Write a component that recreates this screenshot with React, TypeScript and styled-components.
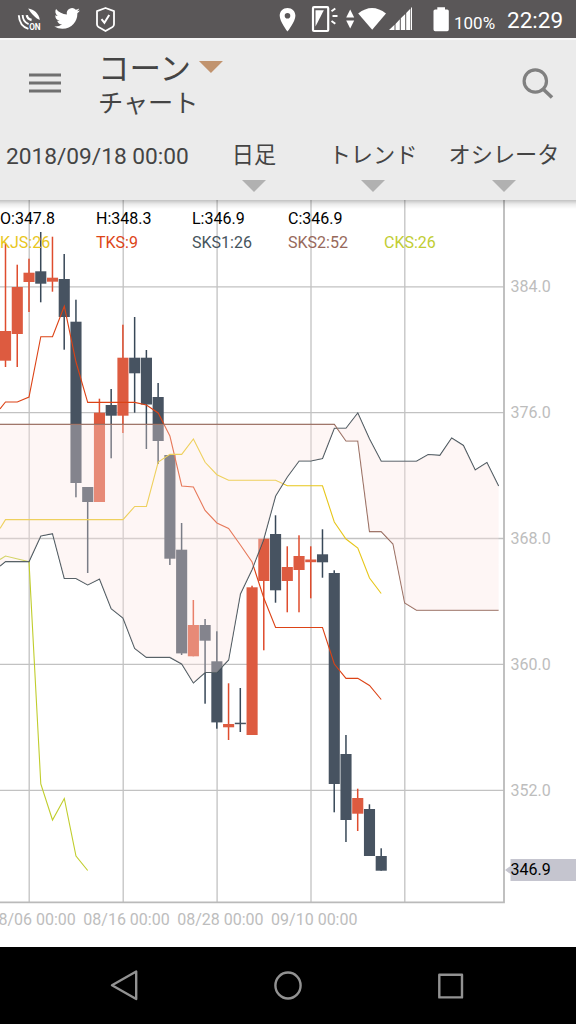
import React from "react";
import styled, { createGlobalStyle } from "styled-components";

const GlobalStyle = createGlobalStyle`
  * { box-sizing: border-box; }
  body {
    margin: 0;
    background: #fff;
    font-family: Roboto, "Noto Sans CJK JP", sans-serif;
  }
`;

const Screen = styled.div`
  width: 576px;
  height: 1024px;
  display: flex;
  flex-direction: column;
  overflow: hidden;
  background: #fff;
`;

const StatusBar = styled.div`
  height: 38px;
  flex: none;
  display: flex;
  justify-content: space-between;
  background: #5a5758;
  color: #fff;
`;

const StatusGroup = styled.div`
  display: flex;
  height: 38px;
`;

const BatteryText = styled.span`
  font-size: 17px;
  line-height: 20px;
  padding-top: 13px;
  margin-left: -1px;
  width: 53px;
`;

const Clock = styled.span`
  font-size: 22.5px;
  line-height: 26px;
  padding-top: 7px;
  width: 69px;
`;

const Header = styled.header`
  height: 162px;
  flex: none;
  background: #ebebeb;
  border-top: 2px solid #f6f6f6;
  color: #444;
`;

const TitleRow = styled.div`
  display: flex;
  height: 88px;
`;

const IconButton = styled.button<{ $left: number; $top: number; $w: number }>`
  border: 0;
  padding: 0;
  background: none;
  width: ${(p) => p.$w}px;
  height: 40px;
  margin: ${(p) => p.$top}px 0 0 ${(p) => p.$left}px;
  display: block;
`;

const Titles = styled.div`
  width: 424px;
  padding-left: 36px;
`;

const Title = styled.div`
  display: flex;
  font-size: 31.5px;
  line-height: 40px;
  height: 42px;
  padding-top: 10px;
`;

const Subtitle = styled.div`
  font-size: 25.2px;
  line-height: 30px;
  padding-top: 7px;
`;

const Caret = styled.span<{ $color: string }>`
  width: 24px;
  height: 12px;
  flex: none;
  background: ${(p) => p.$color};
  clip-path: polygon(0 0, 100% 0, 50% 100%);
`;

const TitleCaret = styled(Caret)`
  margin: 11px 0 0 8px;
`;

const FilterRow = styled.div`
  display: flex;
  height: 72px;
`;

const DateLabel = styled.div`
  font-size: 22.7px;
  line-height: 28px;
  padding: 15px 0 0 6px;
  width: 210px;
`;

const Filter = styled.div<{ $width: number }>`
  width: ${(p) => p.$width}px;
  display: flex;
  flex-direction: column;
  align-items: center;
  font-size: 22.2px;
  line-height: 30px;
  padding-top: 12px;
  gap: 10px;
  white-space: nowrap;
`;

const ChartArea = styled.main`
  height: 747px;
  flex: none;
`;

const Svg = styled.svg`
  display: block;
`;

const AxisText = styled.text`
  font: 16px Roboto, sans-serif;
  fill: #bdbdbd;
`;

const LegendText = styled.text<{ $color: string }>`
  font: 16px Roboto, sans-serif;
  fill: ${(p) => p.$color};
`;

const NavBar = styled.nav`
  height: 77px;
  flex: none;
  background: #000;
`;

const RED = "#dd5b40";
const DARK = "#475361";
const STEP = 11.74;
const xAt = (i: number) => 5.55 + i * STEP;

type Candle = [up: 0 | 1, high: number, top: number, bottom: number, low: number];

const candles: Candle[] = [
  [1, 243.5, 331, 360.7, 367],
  [1, 264.7, 287, 334, 367],
  [1, 258.7, 272.7, 282, 312],
  [0, 232, 271.3, 283.7, 302.3],
  [1, 236.7, 277.7, 281.7, 291.7],
  [0, 254, 279, 317, 349.7],
  [0, 299.7, 321.7, 483, 497.3],
  [0, 487, 487, 502, 573],
  [1, 398.7, 412.7, 502, 502],
  [0, 389, 405, 415.7, 458.3],
  [1, 324.7, 357.7, 415.7, 433],
  [0, 317, 357.7, 373.3, 412.7],
  [0, 350, 357.7, 404.5, 449],
  [0, 383, 397, 441, 464],
  [0, 455, 455, 558.7, 565],
  [0, 523, 549.7, 653.4, 655],
  [1, 600, 625, 656.3, 656.3],
  [0, 619, 625, 640.7, 703.7],
  [0, 631.3, 661.3, 722.4, 728.7],
  [1, 683.3, 724, 727.3, 740],
  [0, 688, 722.7, 724.2, 732],
  [1, 585.7, 587.3, 735, 735],
  [1, 538.7, 538.7, 581, 650.3],
  [0, 515.3, 534, 590.3, 602.7],
  [1, 546.3, 567, 581, 612.3],
  [1, 535.3, 556, 570, 612.3],
  [1, 546.3, 559.5, 562.2, 598.3],
  [0, 529.3, 554.3, 562.3, 577.7],
  [0, 570.3, 573, 784, 812.3],
  [0, 735, 754, 820, 842],
  [1, 788.7, 798, 813.7, 831],
  [0, 804.3, 809, 856, 856],
  [0, 848.3, 856, 870.7, 870.7],
];

type Series = [index: number, y: number][];

const tenkan: Series = [
  [-0.47, 409], [0, 402], [1, 402], [2, 397], [3, 336.7], [4, 336.7], [5, 306.3],
  [6, 362], [7, 402.4], [11, 402.4], [12, 405], [13, 413], [14, 436], [15, 486],
  [16, 487], [17, 510.5], [18, 523], [19, 528.5], [20, 545], [21, 562], [22, 598],
  [23, 627.5], [27, 627.5], [28, 664], [29, 678.4], [30, 678.4], [31, 685.5], [32, 699.5],
];

const kijun: Series = [
  [-0.47, 528.5], [0, 519.6], [10, 519.6], [11, 506.5], [12, 506.5], [13, 462],
  [14, 454.4], [15, 454.4], [16, 439], [17, 462.3], [18, 474.7], [19, 480.3],
  [23, 480.3], [24, 485.8], [27, 485.8], [28, 522], [29, 539], [30, 548],
  [31, 578], [32, 593.5],
];

const spanA: Series = [
  [-0.47, 566], [0, 561.6], [2, 561.6], [3, 536], [4, 533.6], [5, 578.5], [6, 578.5],
  [7, 585], [8, 579], [9, 608.7], [10, 618], [11, 648.5], [12, 657.4], [14, 657.4],
  [15, 664], [16, 683], [17, 672.5], [18, 672.5], [19, 660], [20, 594], [21, 569.5],
  [22, 539], [23, 496], [24, 477], [25, 461], [26, 461], [27, 458.5], [28, 428.3],
  [29, 428.3], [30, 413], [31, 439], [32, 461.2], [35, 461.2], [36, 454.5], [37, 455.4],
  [38, 438], [39, 445.5], [40, 470], [41, 462.6], [42, 486],
];

const spanB: Series = [
  [-0.47, 424.4], [28, 424.4], [29, 441], [30, 441], [31, 531.6], [32, 531.6],
  [33, 544], [34, 603], [35, 610.3], [42, 610.3],
];

const chikou: Series = [
  [-0.47, 559.5], [0, 556], [2, 561.8], [3, 784], [4, 820], [5, 798.5], [6, 856], [7, 870.5],
];

const points = (s: Series) => s.map(([i, y]) => `${xAt(i).toFixed(1)},${y}`).join(" ");
const cloud = points([...spanA, ...[...spanB].reverse()]);

const legend: [string, number, number, string][] = [
  ["O:347.8", 0, 224, "#000"],
  ["H:348.3", 96, 224, "#000"],
  ["L:346.9", 192, 224, "#000"],
  ["C:346.9", 288, 224, "#000"],
  ["KJS:26", 0, 248, "#e8c61c"],
  ["TKS:9", 96, 248, "#dd4517"],
  ["SKS1:26", 192, 248, "#46545c"],
  ["SKS2:52", 288, 248, "#97695b"],
  ["CKS:26", 384, 248, "#c1cd32"],
];

const Line = ({ data, color, width = 1.1 }: { data: Series; color: string; width?: number }) => (
  <polyline points={points(data)} fill="none" stroke={color} strokeWidth={width} />
);

const Chart = () => (
  <Svg width="576" height="747" viewBox="0 200 576 747">
    <defs>
      <linearGradient id="shade" x1="0" y1="0" x2="0" y2="1">
        <stop offset="0" stopColor="#000" stopOpacity="0.24" />
        <stop offset="0.45" stopColor="#000" stopOpacity="0.08" />
        <stop offset="1" stopColor="#000" stopOpacity="0" />
      </linearGradient>
    </defs>
    {[29.2, 123.2, 217.1, 311, 404.8].map((x) => (
      <line key={x} x1={x} x2={x} y1="200" y2="902" stroke="#c2c2c2" strokeWidth="1.3" />
    ))}
    {[286.9, 412.7, 538.5, 664.3, 790.3].map((y, i) => (
      <g key={y}>
        <line x1="0" x2="504" y1={y} y2={y} stroke="#c2c2c2" strokeWidth="1.3" />
        <AxisText x="510.5" y={y + 5.2}>{`${384 - i * 8}.0`}</AxisText>
      </g>
    ))}
    <path d="M504 200V902.3H0" fill="none" stroke="#bababa" strokeWidth="1.8" />
    {candles.map(([up, high, top, bottom, low], i) => (
      <g key={i} fill={up ? RED : DARK}>
        <rect x={xAt(i) - 0.8} y={high} width="1.5" height={low - high} fill={up ? "#df4c2d" : "#384858"} />
        <rect x={xAt(i) - 5.55} y={top} width="11.1" height={bottom - top} />
      </g>
    ))}
    <Line data={tenkan} color="#dc4316" />
    <Line data={kijun} color="#e7c61a" />
    <Line data={chikou} color="#c0cd2c" />
    <Line data={spanA} color="#37474f" />
    <Line data={spanB} color="#8d6052" />
    <polygon points={cloud} fill="#fce5e2" fillOpacity="0.34" />
    {legend.map(([label, x, y, color]) => (
      <LegendText key={label} x={x} y={y} $color={color}>{label}</LegendText>
    ))}
    {["08/06 00:00", "08/16 00:00", "08/28 00:00", "09/10 00:00"].map((label, i) => (
      <AxisText key={label} x={-10.6 + i * 93.9} y="925">{label}</AxisText>
    ))}
    <path d="M505 870L510.5 866V859H576V881H510.5V874Z" fill="#c5c5cf" />
    <LegendText x="510.5" y="875.4" $color="#000">346.9</LegendText>
    <rect x="0" y="200" width="576" height="9" fill="url(#shade)" />
  </Svg>
);

const NotificationIcons = () => (
  <Svg width="130" height="38" viewBox="0 0 130 38" fill="none" stroke="#fff">
    <g strokeWidth="1.9">
      <path d="M18.8 15.2C19.2 22 22.5 27 28.4 28.8" />
      <path d="M22.6 15C22.8 19.7 25 22.8 28.6 24.2" />
      <path d="M26.8 15.2C27.2 18.2 28.8 19.5 31.6 20" strokeWidth="2.4" />
    </g>
    <path d="M28.2 8.5C34 9.4 38.9 13.3 39.8 20C36.2 18.7 31.3 14 28.2 8.5Z" fill="#fff" stroke="none" />
    <text x="29.2" y="30" fontSize="8.4" fontWeight="700" fontFamily="Roboto, sans-serif" fill="#fff" stroke="none" textLength="11.4" lengthAdjust="spacingAndGlyphs">ON</text>
    <path
      transform="translate(54.3 5.6) scale(1.07)"
      d="M23.95 4.57a10 10 0 0 1-2.82.77 4.96 4.96 0 0 0 2.16-2.72c-.95.55-2 .95-3.13 1.18a4.92 4.92 0 0 0-8.38 4.48C7.69 8.1 4.07 6.13 1.64 3.16a4.92 4.92 0 0 0 1.52 6.57 4.9 4.9 0 0 1-2.23-.61v.06a4.92 4.92 0 0 0 3.95 4.83 5 5 0 0 1-2.21.08 4.94 4.94 0 0 0 4.6 3.42A9.87 9.87 0 0 1 0 19.54a14 14 0 0 0 7.55 2.21c9.05 0 14-7.5 14-13.98 0-.21 0-.42-.02-.63a9.94 9.94 0 0 0 2.42-2.57Z"
      fill="#fff"
      stroke="none"
    />
    <path d="M105.5 8L114 11.2V24.2Q114 26 112.5 27L105.5 31L98.5 27Q97 26 97 24.2V11.2Z" strokeWidth="1.8" strokeLinejoin="round" />
    <path d="M101.5 19.2L104.4 22.7L109.2 15" strokeWidth="2" />
  </Svg>
);

const SystemIcons = () => (
  <Svg width="180" height="38" viewBox="275 0 180 38" fill="#fff">
    <path fillRule="evenodd" d="M287.5 8C283 8 279.7 11.4 279.7 15.7C279.7 21.5 287.5 31.5 287.5 31.5S295.4 21.5 295.4 15.7C295.4 11.4 292 8 287.5 8ZM287.5 13A2.8 2.8 0 1 1 287.5 18.6A2.8 2.8 0 1 1 287.5 13Z" />
    <rect x="313" y="7.2" width="15.2" height="23.8" rx="1" fill="none" stroke="#fff" strokeWidth="2.2" />
    <path d="M315.5 10.2H323.8L315.5 26.5Z" />
    <path d="M331.5 11.2L335.3 8.5M332.5 16H337.5M331.5 21L335.3 23.8" stroke="#fff" strokeWidth="2" />
    <path d="M350.2 9.5L354.2 17.5H346.2ZM346.2 20.5H354.2L350.2 28.5Z" />
    <path d="M358.2 13.5Q372 2.5 386 13.5L372.2 29.8Z" />
    <path d="M389 30L394.5 24.7V30ZM395.5 24V30H399.8V19.2ZM400.8 18.2V30H405.2V13.9ZM406.2 12.9V30H410.3V8.7Z" />
    <rect x="411" y="7.5" width="1" height="22.5" />
    <path d="M437.3 7.2H445V9.5H447.2Q448.8 9.5 448.8 11V29.5Q448.8 31.2 447.2 31.2H435.2Q433.5 31.2 433.5 29.5V11Q433.5 9.5 435.2 9.5H437.3Z" />
  </Svg>
);

export default function App() {
  return (
    <>
      <GlobalStyle />
      <Screen>
        <StatusBar>
          <NotificationIcons />
          <StatusGroup>
            <SystemIcons />
            <BatteryText>100%</BatteryText>
            <Clock>22:29</Clock>
          </StatusGroup>
        </StatusBar>
        <Header>
          <TitleRow>
            <IconButton $left={28} $top={24} $w={34} aria-label="Menu">
              <Svg width="34" height="40" viewBox="0 0 34 40" stroke="#707070" strokeWidth="3">
                <path d="M1 11H33M1 19H33M1 27H33" />
              </Svg>
            </IconButton>
            <Titles>
              <Title>
                コーン
                <TitleCaret $color="#c1936e" />
              </Title>
              <Subtitle>チャート</Subtitle>
            </Titles>
            <IconButton $left={36} $top={24} $w={34} aria-label="Search">
              <Svg width="34" height="40" viewBox="522 64 34 40" fill="none" stroke="#808080">
                <circle cx="535.3" cy="81" r="11.2" strokeWidth="3.2" />
                <path d="M543 89L552 97.5" strokeWidth="3.6" />
              </Svg>
            </IconButton>
          </TitleRow>
          <FilterRow>
            <DateLabel>2018/09/18 00:00</DateLabel>
            <Filter $width={88}>日足<Caret $color="#b1b1b1" /></Filter>
            <Filter $width={150}>トレンド<Caret $color="#b1b1b1" /></Filter>
            <Filter $width={112}>オシレータ<Caret $color="#b1b1b1" /></Filter>
          </FilterRow>
        </Header>
        <ChartArea>
          <Chart />
        </ChartArea>
        <NavBar>
          <Svg width="576" height="77" viewBox="0 947 576 77" fill="none" stroke="#929292" strokeWidth="2.4" strokeLinejoin="round">
            <path d="M136.2 971.5V999L112 985.3Z" />
            <ellipse cx="288" cy="985.5" rx="12.6" ry="13" />
            <rect x="439.3" y="974.7" width="22.7" height="22.7" />
          </Svg>
        </NavBar>
      </Screen>
    </>
  );
}
